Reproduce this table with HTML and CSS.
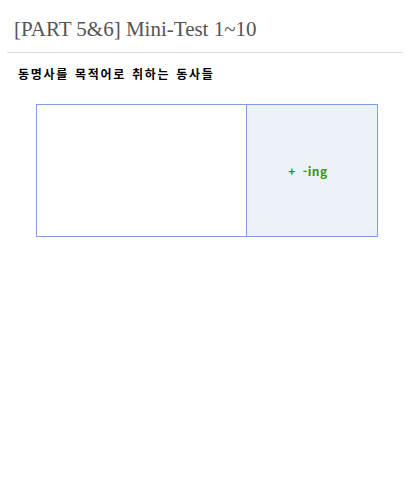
FILE: index.html
```html
<!DOCTYPE html>
<html lang="ko">
<head>
  <meta charset="UTF-8">
  <title>[PART 5&amp;6] Mini-Test 1~10</title>
  <link rel="stylesheet" href="styles.css">
</head>
<body>
  <div class="page">
    <h1 class="page-title">[PART 5&amp;6] Mini-Test 1~10</h1>
    <div class="content">
      <h2 class="topic">동명사를 목적어로 취하는 동사들</h2>
      <table class="verb-table">
        <tr>
          <td class="verb-cell"></td>
          <td class="form-cell">+ -ing</td>
        </tr>
      </table>
    </div>
  </div>
</body>
</html>
```

FILE: styles.css
```css
* {
  margin: 0;
  padding: 0;
  box-sizing: border-box;
}

body {
  font-family: "Liberation Serif", "Noto Sans CJK KR", serif;
  background-color: #fff;
  color: #000;
}

.page {
  padding: 0 7px;
}

/* 제목 */
.page-title {
  font-family: "Liberation Serif", serif;
  font-weight: normal;
  font-size: 21px;
  color: #555;
  padding: 16px 0 10px 7px;
  line-height: 26px;
  border-bottom: 1px solid #ddd;
}

.content {
  padding: 13px 11px;
}

.topic {
  font-family: "Noto Sans CJK KR", sans-serif;
  font-size: 12px;
  font-weight: bold;
  letter-spacing: 1.7px;
  word-spacing: 1px;
  line-height: 16px;
  margin-bottom: 22px;
}

/* 표 */
.verb-table {
  border-collapse: collapse;
  margin-left: 18px;
  width: 342px;
}

.verb-table td {
  border: 1px solid #809fe2;
  height: 132px;
}

.verb-cell {
  width: 210px;
}

.form-cell {
  background-color: #edf2f9;
  text-align: center;
  color: #339900;
  font-family: "Noto Sans CJK KR", sans-serif;
  font-weight: bold;
  font-size: 12px;
  letter-spacing: 0.5px;
  word-spacing: 3px;
  padding-right: 8px;
}
```
